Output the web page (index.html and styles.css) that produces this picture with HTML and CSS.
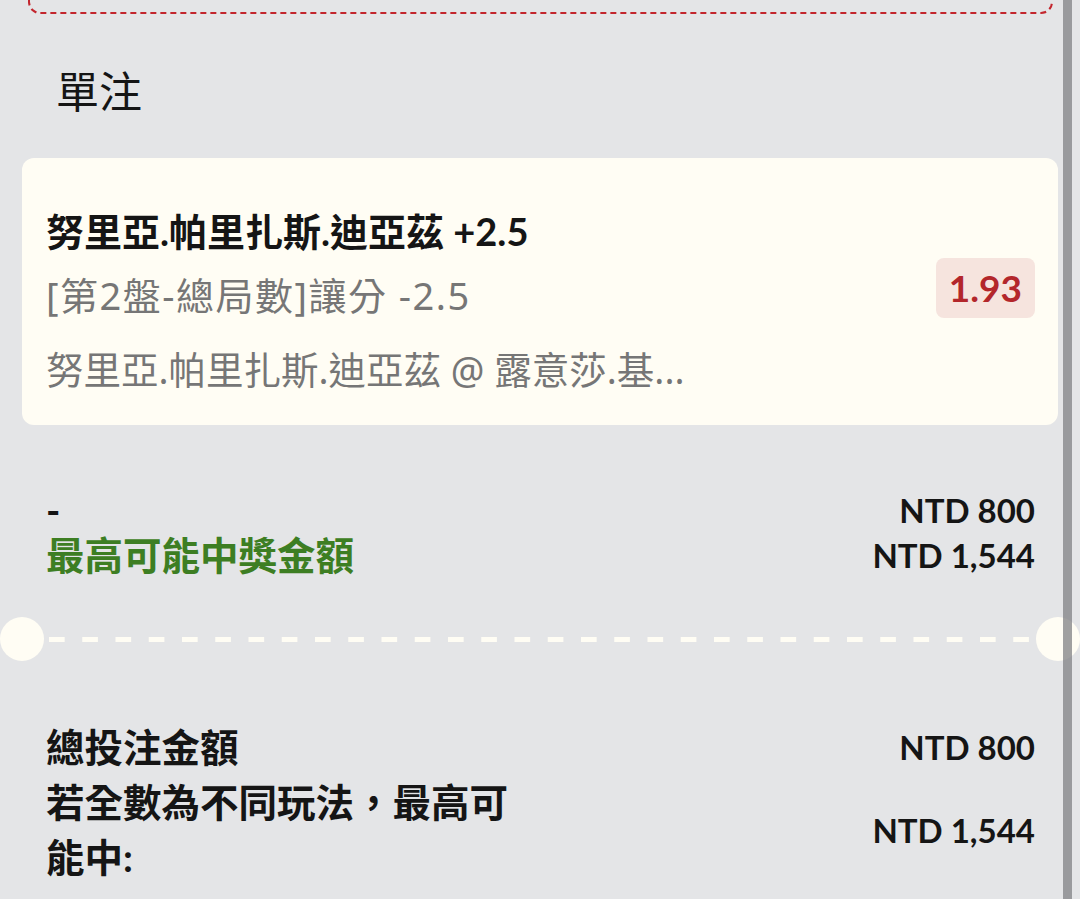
FILE: index.html
```html
<!DOCTYPE html>
<html lang="zh-Hant">

<head>
    <meta charset="UTF-8">
    <meta name="viewport" content="width=device-width, initial-scale=1.0">
    <title>單注</title>

    <link rel="stylesheet" href="styles.css">
</head>

<body>
    <div class="page">
        <div class="promo-box"></div>

        <h2 class="section-title">單注</h2>

        <div class="bet-card">
            <div class="bet-info">
                <div class="bet-pick">努里亞.帕里扎斯.迪亞茲 +2.5</div>
                <div class="bet-market">[第2盤-總局數]讓分 -2.5</div>
                <div class="bet-event">努里亞.帕里扎斯.迪亞茲 @ 露意莎.基...</div>
            </div>
            <span class="odds">1.93</span>
        </div>

        <div class="summary">
            <span class="label">-</span>
            <span class="amount">NTD 800</span>
            <span class="label win">最高可能中獎金額</span>
            <span class="amount">NTD 1,544</span>
        </div>

        <div class="ticket-divider">
            <span class="notch"></span>
            <span class="dashes"></span>
            <span class="notch"></span>
        </div>

        <div class="summary totals">
            <span class="label">總投注金額</span>
            <span class="amount">NTD 800</span>
            <span class="label wrap">若全數為不同玩法，最高可能中:</span>
            <span class="amount">NTD 1,544</span>
        </div>
    </div>

    <div class="scrollbar"></div>
</body>

</html>
```

FILE: styles.css
```css
html,
body {
    margin: 0;
    height: 100%;
    overflow: hidden;
}

body {
    background-color: #e4e5e7;
    font-family: Lato, "Noto Sans CJK TC", sans-serif;
    color: #151515;
}

.page {
    display: flex;
    flex-direction: column;
}

/* 上方的虛線框 (只露出底部) */
.promo-box {
    margin: -60px 27px 0 28px;
    height: 70px;
    border: 2px dashed #c3262e;
    border-radius: 12px;
}

.section-title {
    margin: 51px 0 45px;
    padding-left: 56px;
    font-size: 43px;
    font-weight: 400;
    line-height: 48px;
    font-family: "Noto Sans CJK TC", sans-serif;
}

/* 注單卡片 */
.bet-card {
    margin: 0 22px;
    padding: 44px 23px 26px 24px;
    background-color: #fffdf4;
    border-radius: 12px;

    display: flex;
    align-items: center;
    justify-content: space-between;
}

.bet-info {
    display: flex;
    flex-direction: column;
    gap: 6px;
}

.bet-pick {
    font-size: 38px;
    font-weight: 700;
    line-height: 58px;
}

.bet-market,
.bet-event {
    font-family: "Noto Sans", "Noto Sans CJK TC", sans-serif;
    font-size: 38px;
    line-height: 58px;
    color: #767676;
}

.bet-market {
    letter-spacing: 1.5px;
}

.bet-event {
    margin-top: 11px;
    font-size: 37.5px;
}

.odds {
    margin-bottom: 26px;
    padding: 0 13px;
    height: 60px;
    line-height: 60px;
    border-radius: 8px;
    background-color: #f6e4de;
    color: #b3262b;
    font-size: 37px;
    font-weight: 700;
}

/* 金額列 */
.summary {
    margin-top: 63px;
    padding: 0 45px 0 46px;

    display: grid;
    grid-template-columns: 1fr auto;
    align-items: center;
    line-height: 45px;
}

.summary .label {
    font-size: 38.5px;
    font-weight: 700;
}

.summary .win {
    color: #3d7e23;
}

.summary .amount {
    font-size: 33px;
    font-weight: 700;
    text-align: right;
}

/* 票根虛線 */
.ticket-divider {
    margin-top: 39px;
    height: 44px;

    display: flex;
    align-items: center;
}

.ticket-divider .notch {
    width: 44px;
    height: 44px;
    border-radius: 50%;
    background-color: #fffdf4;
}

.ticket-divider .dashes {
    flex: 1;
    height: 5px;
    margin: 0 5px;
    background-image: linear-gradient(to right, #fffdf4 16px, transparent 16px);
    background-size: 33.25px 5px;
}

.totals {
    margin-top: 59px;
    line-height: 55px;
}

.totals .wrap {
    max-width: 480px;
}

.scrollbar {
    position: fixed;
    top: 0;
    bottom: 0;
    right: 8px;
    width: 9px;
    background-color: rgba(128, 128, 132, 0.75);
}
```
